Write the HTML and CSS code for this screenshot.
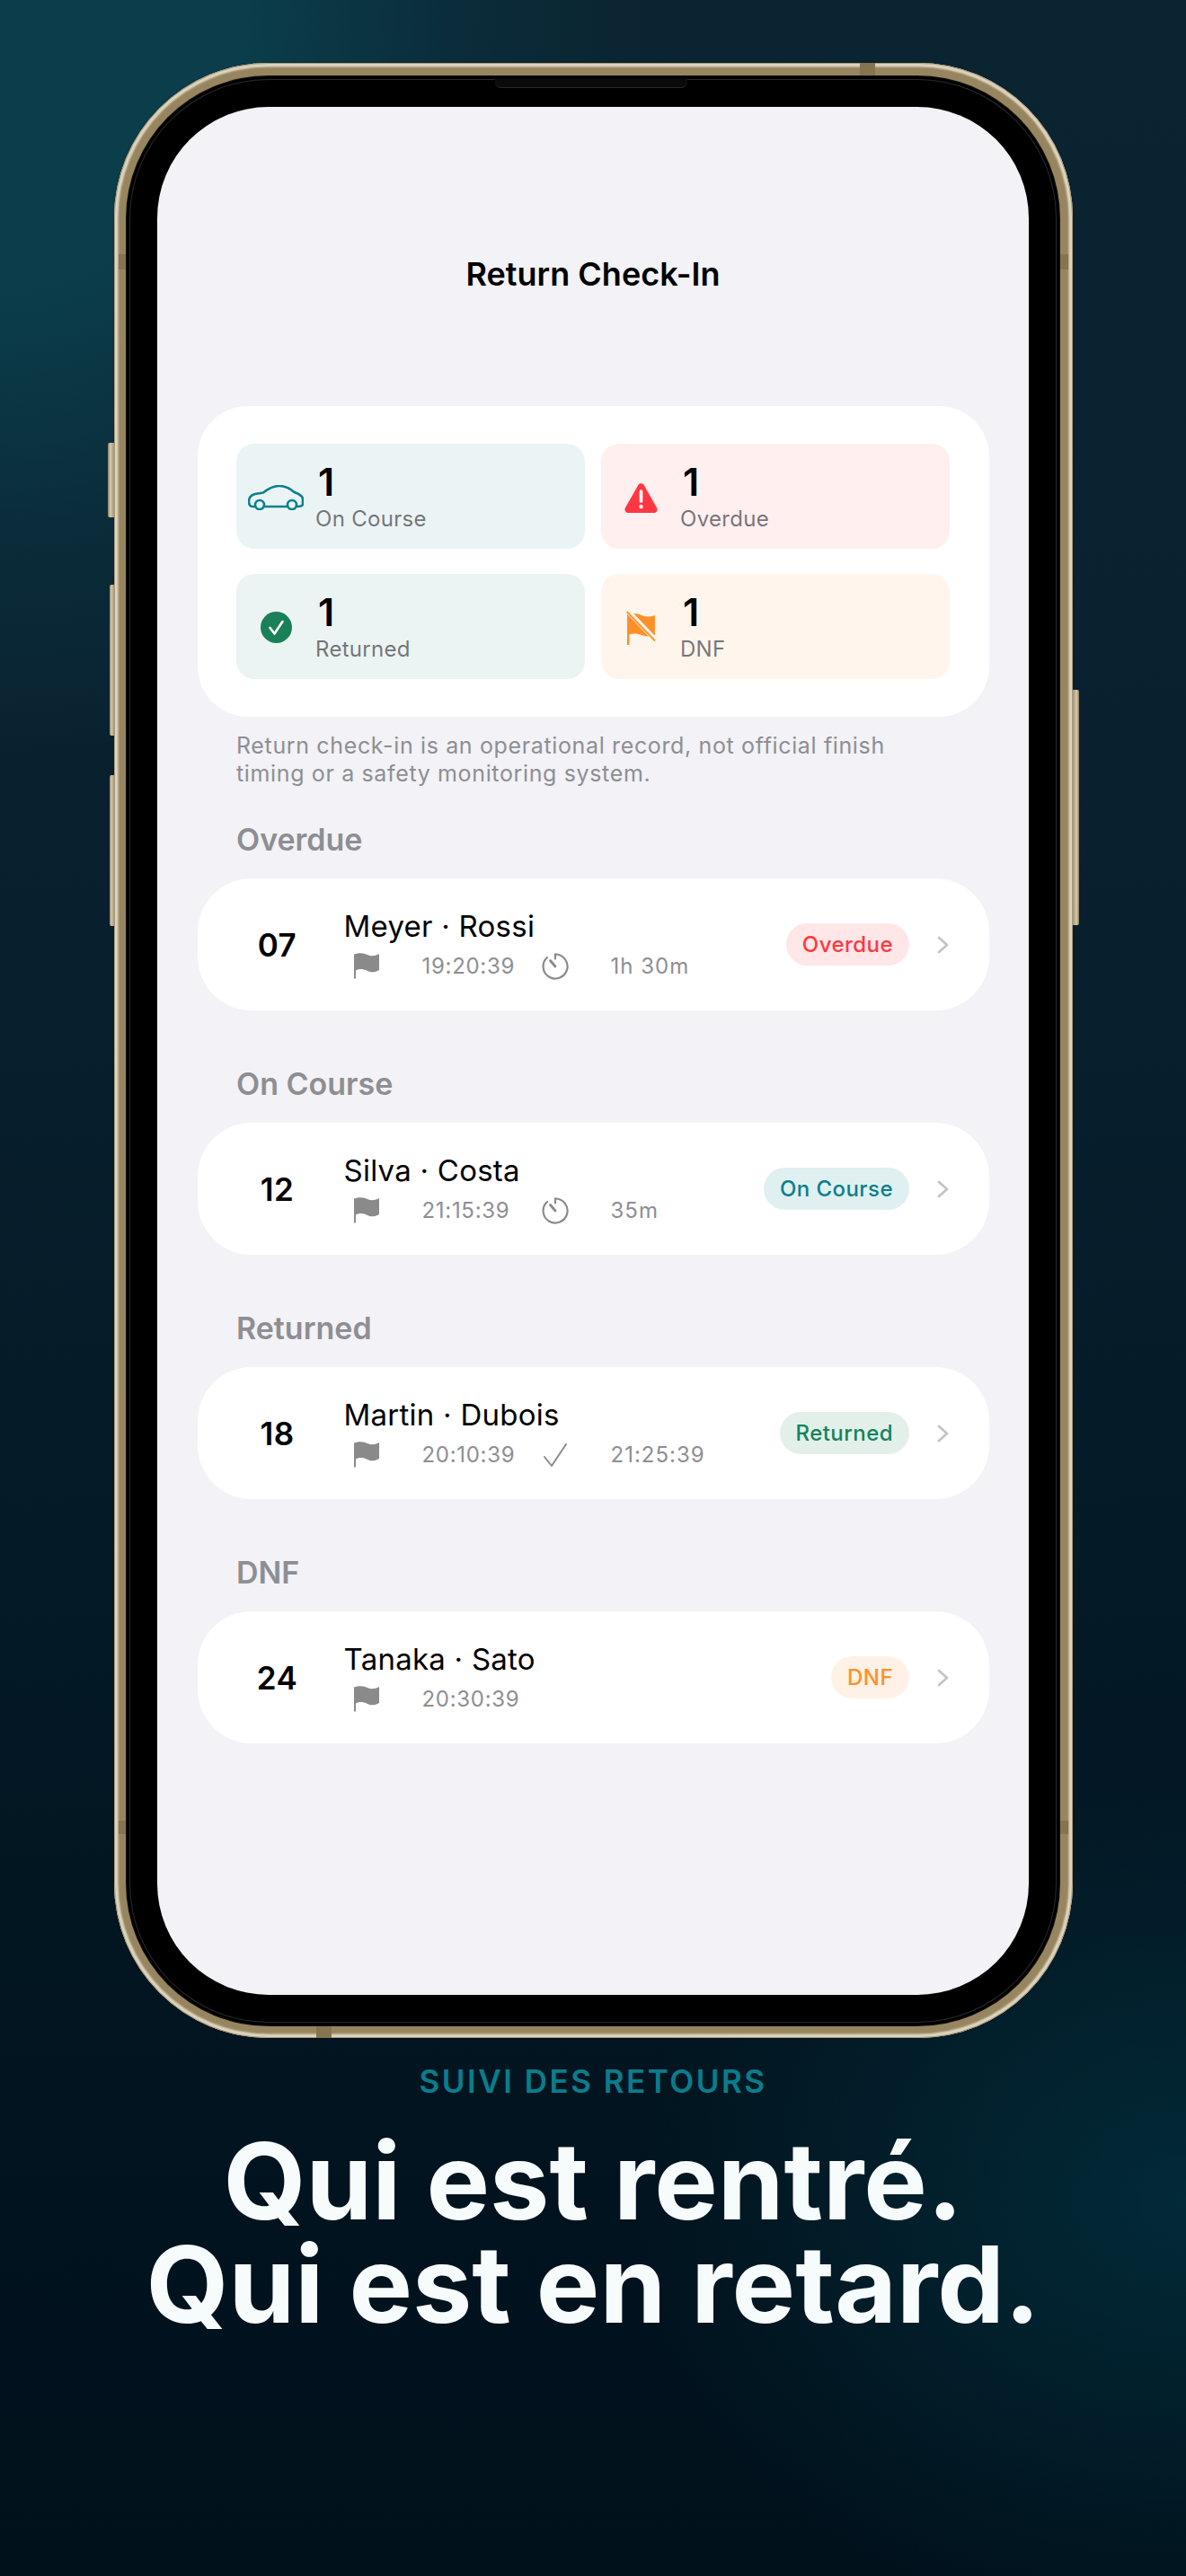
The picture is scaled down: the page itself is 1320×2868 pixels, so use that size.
FILE: index.html
```html
<!DOCTYPE html>
<html lang="fr">
<head>
<meta charset="utf-8">
<title>Return Check-In</title>
<link rel="stylesheet" href="styles.css">
</head>
<body>
<main class="poster">
  <div class="phone">
    <span class="btn btn-action"></span>
    <span class="btn btn-vol-up"></span>
    <span class="btn btn-vol-down"></span>
    <span class="btn btn-power"></span>
    <span class="band band-top"></span>
    <span class="band band-left-a"></span>
    <span class="band band-right-a"></span>
    <span class="band band-left-b"></span>
    <span class="band band-right-b"></span>
    <span class="band band-bottom"></span>
    <div class="bezel">
      <span class="speaker"></span>
      <div class="screen">
        <h1 class="title">Return Check-In</h1>

        <section class="summary">
          <div class="tile tile-course">
            <span class="tile-icon">
              <svg width="62" height="28" viewBox="0 0 62 28" fill="none" stroke="#0A8090" stroke-width="2.6" stroke-linejoin="round" stroke-linecap="round"><path d="M8 24H5C2.500 24 1 22 1 18.500C1 13.500 3.500 11 8 10L17 8.500C22 4.500 27 1 35 1C42 1 47 4 51.500 8C57 10 61 12 61 15.500V21C61 23 59 24 55 24M44 24H18"/><circle cx="13" cy="22" r="5"/><circle cx="49" cy="22" r="5"/></svg>
            </span>
            <div class="tile-text"><strong class="count">1</strong><span class="tile-label">On Course</span></div>
          </div>
          <div class="tile tile-overdue">
            <span class="tile-icon">
              <svg width="37" height="33" viewBox="0 0 37 33"><path d="M15.200 2.200C16.700-.4 20.300-.4 21.800 2.200L36 27.200C37.500 29.800 35.800 33 32.700 33H4.300C1.200 33 -.5 29.800 1 27.200Z" fill="#FF3742"/><path d="M18.500 9V20" stroke="#fff" stroke-width="3.600" stroke-linecap="round"/><circle cx="18.500" cy="26" r="2.200" fill="#fff"/></svg>
            </span>
            <div class="tile-text"><strong class="count">1</strong><span class="tile-label">Overdue</span></div>
          </div>
          <div class="tile tile-returned">
            <span class="tile-icon">
              <svg width="35" height="35" viewBox="0 0 35 35"><circle cx="17.500" cy="17.500" r="17.500" fill="#1A8058"/><path d="M10.500 18L15.500 24.500L24.500 11" fill="none" stroke="#fff" stroke-width="2.600" stroke-linecap="round" stroke-linejoin="round"/></svg>
            </span>
            <div class="tile-text"><strong class="count">1</strong><span class="tile-label">Returned</span></div>
          </div>
          <div class="tile tile-dnf">
            <span class="tile-icon">
              <svg width="33" height="38" viewBox="0 0 33 38"><path d="M1 4C8 2 13 3 17 5C22 7 27 7 32 5V27C27 29 22 29 17 27C12 25 7 25 3.500 26.500V38H1Z" fill="#FF9028"/><path d="M2 .500L32 32" stroke="#FFF5ED" stroke-width="5.500"/><path d="M.5 1L32 33.500" stroke="#FF9028" stroke-width="1.800"/></svg>
            </span>
            <div class="tile-text"><strong class="count">1</strong><span class="tile-label">DNF</span></div>
          </div>
        </section>

        <p class="note">Return check-in is an operational record, not official finish<br>timing or a safety monitoring system.</p>

        <h2 class="group group-first">Overdue</h2>
        <article class="row">
          <span class="num">07</span>
          <div class="info">
            <div class="name">Meyer · Rossi</div>
            <div class="meta">
              <svg class="flag" width="28" height="29" viewBox="0 0 28 29"><path d="M0 1.500C7-1 12 .5 15 2C19 4 23 3.500 28 1V19C23 22 18 22 14 19.500C10 17.500 5 17.500 2 19.500V28.500H0Z" fill="#8A8A8A"/></svg>
              <span class="time">19:20:39</span>
              <svg class="mark" width="30" height="30" viewBox="0 0 30 30" fill="none" stroke="#8A8A8A" stroke-width="2.200" stroke-linecap="round"><path d="M15 1.500A13.500 13.500 0 1 1 6 5"/><path d="M15 1.500V6.500"/><path d="M9.500 8.500L15 15" stroke-width="2.800"/></svg>
              <span class="time time-end">1h 30m</span>
            </div>
          </div>
          <span class="pill pill-overdue">Overdue</span>
          <svg class="chev" width="14" height="20" viewBox="0 0 14 20" fill="none" stroke="#C4C4C7" stroke-width="2.800" stroke-linecap="round" stroke-linejoin="round"><path d="M3 2L12 10L3 18"/></svg>
        </article>

        <h2 class="group">On Course</h2>
        <article class="row">
          <span class="num">12</span>
          <div class="info">
            <div class="name">Silva · Costa</div>
            <div class="meta">
              <svg class="flag" width="28" height="29" viewBox="0 0 28 29"><path d="M0 1.500C7-1 12 .5 15 2C19 4 23 3.500 28 1V19C23 22 18 22 14 19.500C10 17.500 5 17.500 2 19.500V28.500H0Z" fill="#8A8A8A"/></svg>
              <span class="time">21:15:39</span>
              <svg class="mark" width="30" height="30" viewBox="0 0 30 30" fill="none" stroke="#8A8A8A" stroke-width="2.200" stroke-linecap="round"><path d="M15 1.500A13.500 13.500 0 1 1 6 5"/><path d="M15 1.500V6.500"/><path d="M9.500 8.500L15 15" stroke-width="2.800"/></svg>
              <span class="time time-end">35m</span>
            </div>
          </div>
          <span class="pill pill-course">On Course</span>
          <svg class="chev" width="14" height="20" viewBox="0 0 14 20" fill="none" stroke="#C4C4C7" stroke-width="2.800" stroke-linecap="round" stroke-linejoin="round"><path d="M3 2L12 10L3 18"/></svg>
        </article>

        <h2 class="group">Returned</h2>
        <article class="row">
          <span class="num">18</span>
          <div class="info">
            <div class="name">Martin · Dubois</div>
            <div class="meta">
              <svg class="flag" width="28" height="29" viewBox="0 0 28 29"><path d="M0 1.500C7-1 12 .5 15 2C19 4 23 3.500 28 1V19C23 22 18 22 14 19.500C10 17.500 5 17.500 2 19.500V28.500H0Z" fill="#8A8A8A"/></svg>
              <span class="time">20:10:39</span>
              <svg class="mark" width="30" height="30" viewBox="0 0 30 30" fill="none" stroke="#8A8A8A" stroke-width="2" stroke-linecap="round" stroke-linejoin="round"><path d="M3 17L11 27L27 3"/></svg>
              <span class="time time-end">21:25:39</span>
            </div>
          </div>
          <span class="pill pill-returned">Returned</span>
          <svg class="chev" width="14" height="20" viewBox="0 0 14 20" fill="none" stroke="#C4C4C7" stroke-width="2.800" stroke-linecap="round" stroke-linejoin="round"><path d="M3 2L12 10L3 18"/></svg>
        </article>

        <h2 class="group">DNF</h2>
        <article class="row">
          <span class="num">24</span>
          <div class="info">
            <div class="name">Tanaka · Sato</div>
            <div class="meta">
              <svg class="flag" width="28" height="29" viewBox="0 0 28 29"><path d="M0 1.500C7-1 12 .5 15 2C19 4 23 3.500 28 1V19C23 22 18 22 14 19.500C10 17.500 5 17.500 2 19.500V28.500H0Z" fill="#8A8A8A"/></svg>
              <span class="time">20:30:39</span>
            </div>
          </div>
          <span class="pill pill-dnf">DNF</span>
          <svg class="chev" width="14" height="20" viewBox="0 0 14 20" fill="none" stroke="#C4C4C7" stroke-width="2.800" stroke-linecap="round" stroke-linejoin="round"><path d="M3 2L12 10L3 18"/></svg>
        </article>
      </div>
    </div>
  </div>

  <div class="caption">
    <p class="kicker">SUIVI DES RETOURS</p>
    <p class="headline">Qui est rentré.<br>Qui est en retard.</p>
  </div>
</main>
</body>
</html>
```

FILE: styles.css
```css
* { box-sizing: border-box; }

html, body {
  margin: 0;
  padding: 0;
}

body {
  width: 1320px;
  height: 2868px;
  overflow: hidden;
  font-family: Inter, "Liberation Sans", sans-serif;
  background: #02141F;
}

.poster {
  width: 1320px;
  height: 2868px;
  padding: 70px 0 0 127px;
  background:
    radial-gradient(ellipse 720px 850px at 0 0, rgba(11, 61, 75, 1) 0%, rgba(11, 61, 75, 1) 38%, rgba(11, 50, 64, .55) 72%, rgba(11, 44, 58, 0) 100%),
    radial-gradient(ellipse 620px 480px at 1320px 2450px, rgba(3, 46, 60, .85) 0%, rgba(3, 36, 50, 0) 100%),
    linear-gradient(180deg, #0B2431 0%, #0A2230 25%, #041A27 60%, #01131E 85%, #00111C 100%);
}

/* Device */
.phone {
  position: relative;
  width: 1067px;
  height: 2199px;
  padding: 15px 15px 14px 14px;
  border-radius: 172px;
  background: #97855F;
  box-shadow:
    inset 0 0 0 1px #A9997A,
    inset 0 0 2px 4.500px #DDD5C0,
    0 0 2px rgba(0, 0, 0, .4);
}

.btn {
  position: absolute;
  display: block;
  border-radius: 2px 0 0 2px;
  background: linear-gradient(90deg, #8D7D5C 0, #D4CBB2 40%, #A3946F 100%);
}
.btn-action   { left: -7px; top: 423px; width: 7px; height: 83px; }
.btn-vol-up   { left: -5px; top: 581px; width: 5px; height: 168px; }
.btn-vol-down { left: -5px; top: 793px; width: 5px; height: 168px; }
.btn-power    { right: -7px; top: 698px; width: 7px; height: 262px; border-radius: 0 2px 2px 0; background: linear-gradient(270deg, #8D7D5C 0, #D4CBB2 40%, #A3946F 100%); }

.band { position: absolute; display: block; background: #85744F; }
.band-top     { left: 830px; top: 0; width: 17px; height: 15px; }
.band-left-a  { left: 5px; top: 213px; width: 9px; height: 17px; }
.band-right-a { right: 5px; top: 213px; width: 10px; height: 17px; }
.band-left-b  { left: 5px; top: 1957px; width: 9px; height: 15px; }
.band-right-b { right: 5px; top: 1957px; width: 10px; height: 15px; }
.band-bottom  { left: 225px; bottom: 0; width: 17px; height: 14px; }

.bezel {
  position: relative;
  height: 100%;
  padding: 34px;
  border-radius: 158px;
  background: #000;
  box-shadow: inset 0 0 0 3px #000, inset 0 0 0 4px #2A2A2A, 0 0 0 1px #111;
}

.speaker {
  position: absolute;
  top: 2px;
  left: 410px;
  width: 214px;
  height: 11px;
  border-radius: 0 0 7px 7px;
  background: #0B0B0B;
  border-bottom: 1px solid #2A2A2A;
}

.screen {
  height: 100%;
  padding: 0 44.500px;
  border-radius: 124px;
  background: #F2F2F7;
  color: #000;
}

.title {
  margin: 0;
  padding-top: 166px;
  height: 333px;
  font-size: 36px;
  line-height: 40px;
  font-weight: 600;
  text-align: center;
}

/* Summary */
.summary {
  display: grid;
  grid-template-columns: 388px 388px;
  gap: 27px 18px;
  height: 346px;
  padding: 42px 43.500px;
  border-radius: 56px;
  background: #fff;
}

.tile {
  display: flex;
  align-items: center;
  height: 117px;
  padding-left: 13px;
  border-radius: 20px;
}
.tile-course   { background: #EBF4F5; }
.tile-overdue  { background: #FFEFEF; }
.tile-returned { background: #EBF4F2; }
.tile-dnf      { background: #FFF5ED; }

.tile-icon {
  display: flex;
  flex: none;
  align-items: center;
  justify-content: center;
  width: 62px;
  margin-top: 3px;
}

.tile-text {
  display: flex;
  flex-direction: column;
  margin-left: 13px;
}

.count {
  padding-left: 3px;
  font-size: 43px;
  line-height: 48px;
  font-weight: 600;
}

.tile-label {
  margin-top: 3px;
  font-size: 24px;
  line-height: 30px;
  letter-spacing: .3px;
  color: rgba(60, 60, 67, .7);
}

.note {
  margin: 17px 0 0;
  padding-left: 43.500px;
  font-size: 25px;
  line-height: 31px;
  letter-spacing: .64px;
  color: #8E8E93;
}

.group {
  margin: 62px 0 23px 43.500px;
  font-size: 34px;
  line-height: 40px;
  font-weight: 600;
  color: #8E8E93;
}
.group-first { margin-top: 38px; }

/* Rows */
.row {
  display: flex;
  align-items: center;
  height: 147px;
  padding: 0 44.500px 0 44px;
  border-radius: 60px;
  background: #fff;
}

.num {
  flex: none;
  width: 90px;
  font-size: 35px;
  font-weight: 600;
  letter-spacing: .5px;
  text-align: center;
}

.info {
  flex: 1;
  margin-left: 29px;
}

.name {
  font-size: 33px;
  line-height: 40px;
  letter-spacing: .25px;
}

.meta {
  display: flex;
  align-items: center;
  height: 34px;
  margin-top: 8px;
}

.flag { flex: none; margin-left: 11px; }

.time {
  flex: none;
  width: 103px;
  margin-left: 48px;
  font-size: 24px;
  letter-spacing: .7px;
  color: #8E8E93;
}

.time-end { margin-left: 47px; width: auto; letter-spacing: 1px; }

.mark { flex: none; margin-left: 30px; }

.pill {
  flex: none;
  height: 47px;
  padding: 0 18px;
  border-radius: 24px;
  font-size: 24px;
  line-height: 47px;
  font-weight: 500;
  letter-spacing: .45px;
}
.pill-overdue  { background: #FFE6E7; color: #FF3742; }
.pill-course   { background: #E0EFF0; color: #0A7F8A; }
.pill-returned { background: #E3F0EA; color: #17825A; }
.pill-dnf      { background: #FFF1E6; color: #FF9028; }

.chev { flex: none; margin-left: 30px; }

/* Caption */
.caption {
  width: 1320px;
  margin-left: -127px;
  text-align: center;
}

.kicker {
  margin: 27px 0 0;
  font-size: 35px;
  line-height: 42px;
  font-weight: 600;
  letter-spacing: 2.500px;
  color: #0A7D8C;
}

.headline {
  margin: 33px 0 0;
  font-size: 118.500px;
  line-height: 115px;
  font-weight: 700;
  color: #F6FBFC;
}
```
